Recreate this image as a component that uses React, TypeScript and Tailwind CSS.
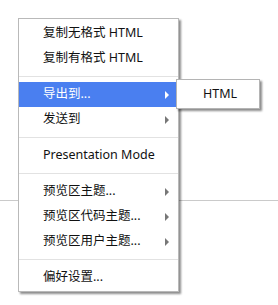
const font = { fontFamily: '"Noto Sans", "Noto Sans CJK SC", sans-serif' };

type Item = { label: string; arrow?: boolean; active?: boolean } | 'sep';

const items: Item[] = [
  { label: '复制无格式 HTML' },
  { label: '复制有格式 HTML' },
  'sep',
  { label: '导出到...', arrow: true, active: true },
  { label: '发送到', arrow: true },
  'sep',
  { label: 'Presentation Mode' },
  'sep',
  { label: '预览区主题...', arrow: true },
  { label: '预览区代码主题...', arrow: true },
  { label: '预览区用户主题...', arrow: true },
  'sep',
  { label: '偏好设置...' },
];

function Arrow({ white }: { white?: boolean }) {
  return (
    <span
      className={`block w-0 h-0 border-y-[4px] border-y-transparent border-l-[4px] ${
        white ? 'border-l-white' : 'border-l-[#777]'
      }`}
    />
  );
}

export default function App() {
  return (
    <div className="relative w-[278px] h-[305px] bg-white overflow-hidden text-[12.5px]" style={font}>
      <div className="pt-[200px]">
        <div className="h-px bg-[#cacaca]" />
      </div>

      <div className="absolute left-[18px] top-[18px] w-[161px] bg-white border border-[#b9b9b9] pt-[2px] pb-[1px] shadow-[2px_2px_2px_rgba(0,0,0,0.45)]">
        {items.map((it, i) =>
          it === 'sep' ? (
            <div key={i} className="py-[5px]">
              <div className="h-px bg-[#e2e2e2]" />
            </div>
          ) : (
            <div
              key={i}
              className={`relative h-[25px] flex items-center justify-between pl-6 pr-[9px] ${
                it.active ? 'bg-[#4a7ff0] text-white' : 'text-[#111]'
              }`}
            >
              <span>{it.label}</span>
              {it.arrow && <Arrow white={it.active} />}
              {it.active && (
                <div className="absolute left-[157px] top-[-3px] w-[84px] h-[30px] bg-white border border-[#b4b4b4] flex items-center pl-[26px] text-[#111] shadow-[2px_2px_2px_rgba(0,0,0,0.45)]">
                  HTML
                </div>
              )}
            </div>
          )
        )}
      </div>
    </div>
  );
}
